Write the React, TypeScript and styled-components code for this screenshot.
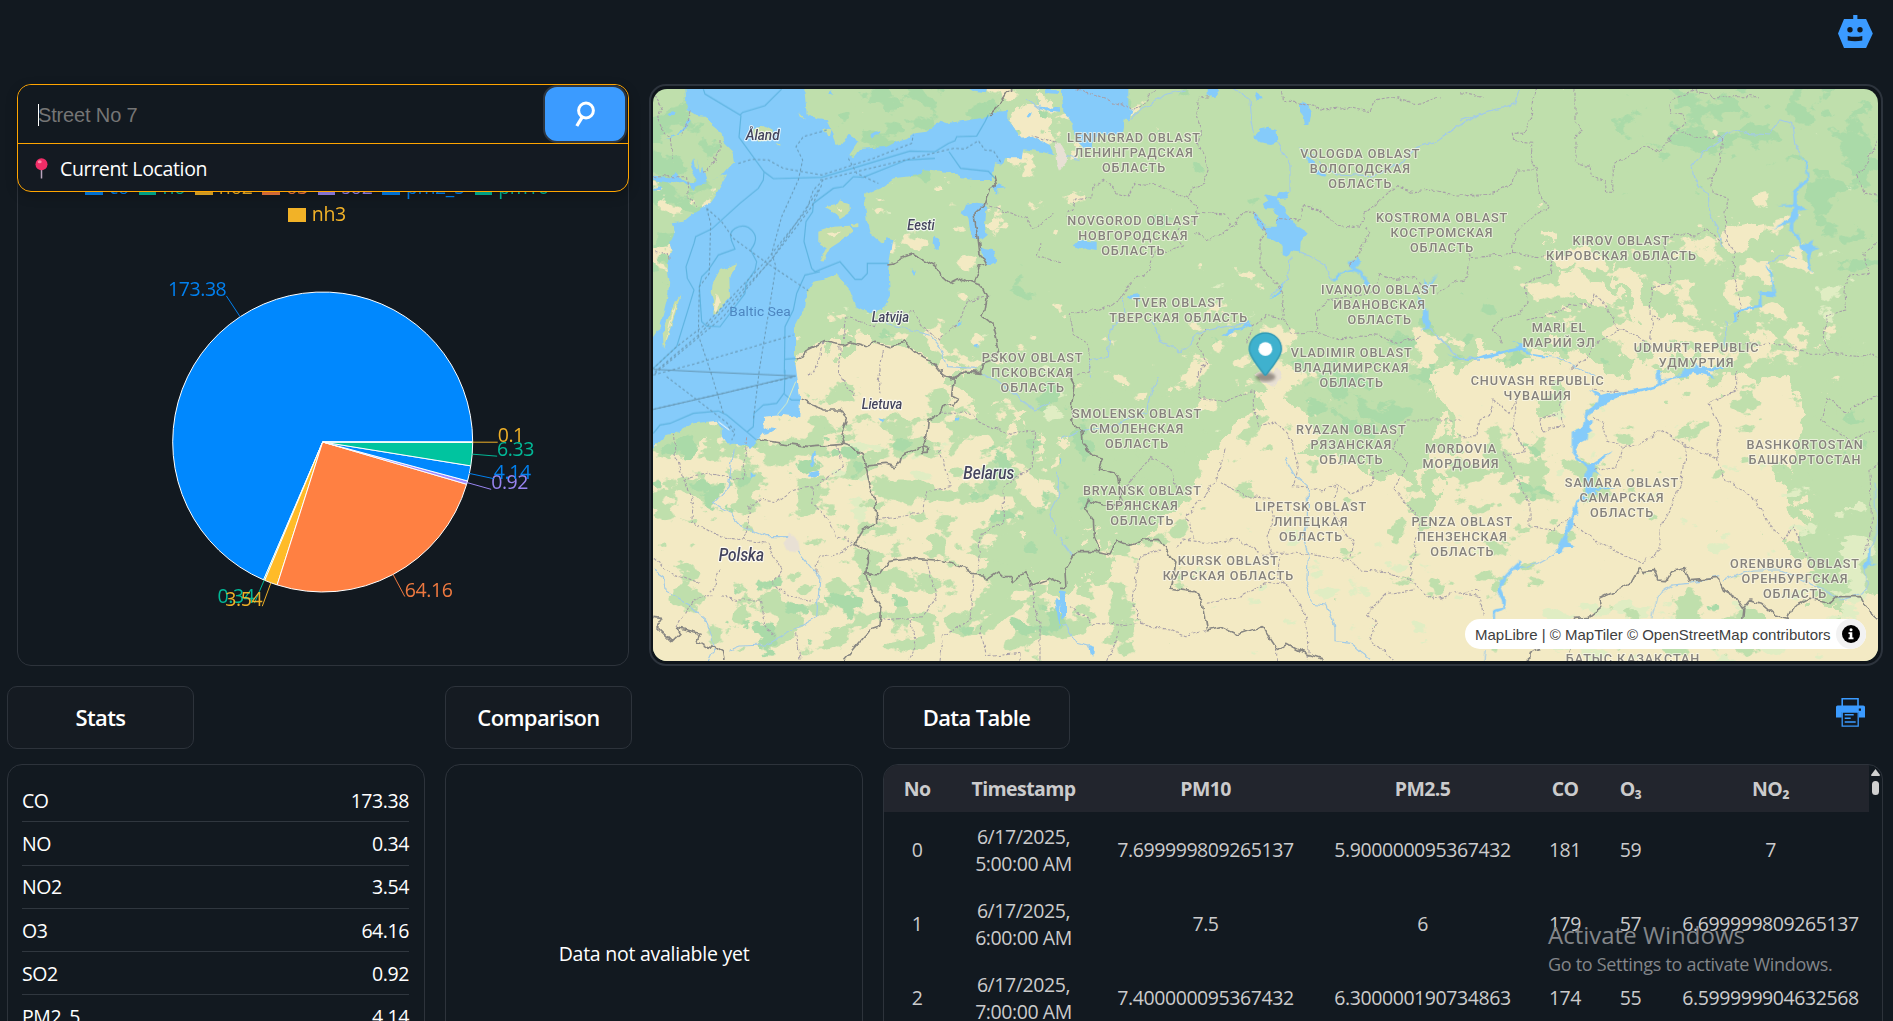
import React from "react";
import styled, { createGlobalStyle } from "styled-components";

const Global = createGlobalStyle`
  * { box-sizing: border-box; }
  body {
    margin: 0;
    background: #121920;
    color: #fff;
    font: 400 19.5px/27px "Open Sans", "Noto Sans", sans-serif;
    letter-spacing: -0.42px;
    overflow: hidden;
  }
`;

const Page = styled.div`
  height: 1021px;
  display: flex;
  flex-direction: column;
  overflow: hidden;
`;
const Header = styled.header`
  height: 84px;
  flex: none;
  display: flex;
  justify-content: flex-end;
  padding: 15px 20px 0 0;
`;
const TopRow = styled.section`
  display: flex;
  flex: none;
  gap: 20px;
  height: 582px;
  padding-left: 17px;
`;
const ChartCard = styled.div`
  position: relative;
  width: 612px;
  border: 1px solid #2d333b;
  border-radius: 14px;
  display: flex;
  flex-direction: column;
`;
const Search = styled.div`
  position: absolute;
  z-index: 2;
  inset: -1px -1px auto -1px;
  height: 108px;
  border: 1px solid #ffa500;
  border-radius: 14px;
  background: #141a22;
  box-shadow: 0 4px 12px rgba(0, 0, 0, 0.22);
  display: flex;
  flex-direction: column;
`;
const SearchBar = styled.div`
  height: 59px;
  border-bottom: 1px solid #ffa500;
  background: #121920;
  border-radius: 14px 14px 0 0;
  display: flex;
  align-items: center;
  justify-content: space-between;
  padding: 0 1px 0 20px;
`;
const Placeholder = styled.span`
  height: 22px;
  border-left: 1px solid #fff;
  margin-top: 1px;
  color: #757575;
  font: 20px/22px "Liberation Sans", Arial, sans-serif;
  letter-spacing: -0.15px;
  text-indent: -1px;
`;
const SearchButton = styled.button`
  width: 84px;
  height: 58px;
  border: 2px solid #2d3640;
  border-radius: 14px;
  background: #3b9bff;
  padding: 0;
  display: grid;
  place-items: center;
`;
const Suggestion = styled.div`
  flex: 1;
  display: flex;
  align-items: center;
  gap: 12px;
  padding: 2px 0 0 17px;
  letter-spacing: -0.35px;
`;
const Legend = styled.div`
  display: flex;
  flex-wrap: wrap;
  justify-content: center;
  padding: 88px 50px 0 48px;
`;
const LegendItem = styled.span<{ $color: string }>`
  display: flex;
  align-items: center;
  height: 27px;
  margin-right: 10px;
  color: ${(p) => p.$color};
  gap: 6px;
  opacity: 0.95;
  &::before {
    content: "";
    width: 17.5px;
    height: 13.5px;
    margin-top: 3px;
    background: ${(p) => p.$color};
  }
`;
const Pie = styled.svg`
  display: block;
  width: 610px;
  height: 438px;
`;
const MapFrame = styled.div`
  width: 1234px;
  border: 2px solid #2d343d;
  border-radius: 17px;
  padding: 3px 3px 3px 2px;
  background: #0f151b;
`;
const MapView = styled.div`
  position: relative;
  width: 1225px;
  height: 572px;
  border-radius: 14px;
  overflow: hidden;
`;
const MapSvg = styled.svg`
  display: block;
  width: 1225px;
  height: 572px;
`;
const Attribution = styled.div`
  position: absolute;
  right: 12px;
  bottom: 12px;
  width: 401px;
  height: 30px;
  border-radius: 15px;
  background: #fff;
  color: #404040;
  font: 15px/31px "Liberation Sans", Arial, sans-serif;
  letter-spacing: 0;
  display: flex;
  justify-content: space-between;
  padding-left: 10px;
  white-space: nowrap;
`;
const InfoButton = styled.span`
  width: 30px;
  height: 30px;
  border-radius: 50%;
  background: #f2f2f2;
  display: grid;
  place-items: center;
`;
const BottomRow = styled.section`
  display: grid;
  grid-template-columns: 418px 418px 1000px;
  column-gap: 20px;
  padding: 20px 0 0 7px;
`;
const Column = styled.div`
  display: flex;
  flex-direction: column;
  gap: 15px;
`;
const TitleRow = styled.div`
  display: flex;
  justify-content: space-between;
  padding-right: 18px;
`;
const Title = styled.h2`
  margin: 0;
  width: 187px;
  height: 63px;
  border: 1px solid #2d333b;
  border-radius: 10px;
  background: #151b22;
  font-size: 22px;
  font-weight: 600;
  letter-spacing: -0.62px;
  display: grid;
  place-items: center;
`;
const Panel = styled.div`
  height: 400px;
  border: 1px solid #2d333b;
  border-radius: 15px;
  overflow: hidden;
`;
const StatsPanel = styled(Panel)`
  padding: 14px 15px 0 14px;
`;
const StatRow = styled.div`
  display: flex;
  justify-content: space-between;
  align-items: center;
  height: 43.3px;
  border-bottom: 1px solid #30373f;
`;
const EmptyPanel = styled(Panel)`
  height: 378px;
  display: grid;
  place-items: center;
  letter-spacing: -0.25px;
`;
const TablePanel = styled(Panel)`
  display: flex;
  color: #cbcbcc;
`;
const Table = styled.div`
  width: 985px;
  overflow: hidden;
`;
const TableRow = styled.div<{ $head?: boolean }>`
  display: grid;
  width: 995px;
  grid-template-columns: 66px 147px 217px 217px 68px 63px 217px;
  height: ${(p) => (p.$head ? 47 : 74)}px;
  align-items: center;
  text-align: center;
  padding-top: ${(p) => (p.$head ? 0 : 1)}px;
  background: ${(p) => (p.$head ? "#22252d" : "transparent")};
  font-weight: ${(p) => (p.$head ? 700 : 400)};
  letter-spacing: ${(p) => (p.$head ? -0.6 : -0.42)}px;
`;
const Stamp = styled.span`
  width: 104px;
  justify-self: center;
`;
const Scrollbar = styled.div`
  flex: 1;
  display: flex;
  flex-direction: column;
  align-items: center;
  gap: 5px;
  padding-top: 4px;
`;
const Thumb = styled.div`
  width: 7px;
  height: 14px;
  border-radius: 4px;
  background: #d0d0d0;
`;
const Watermark = styled.div`
  position: absolute;
  z-index: 3;
  left: 1548px;
  top: 918px;
  color: #83868a;
  white-space: nowrap;
`;
const WatermarkTitle = styled.div`
  font-size: 24px;
  line-height: 33px;
  letter-spacing: 0;
`;
const WatermarkText = styled.div`
  font-size: 18px;
  line-height: 26px;
  letter-spacing: -0.3px;
`;

const pollutants = [
  { name: "co", value: 173.38, color: "#0088fe" },
  { name: "no", value: 0.34, color: "#00c49f" },
  { name: "no2", value: 3.54, color: "#ffbb28" },
  { name: "o3", value: 64.16, color: "#ff8042" },
  { name: "so2", value: 0.92, color: "#a28cff" },
  { name: "pm2_5", value: 4.14, color: "#0088fe" },
  { name: "pm10", value: 6.33, color: "#00c49f" },
  { name: "nh3", value: 0.1, color: "#ffbb28" },
];

const stats: [string, string][] = [
  ["CO", "173.38"],
  ["NO", "0.34"],
  ["NO2", "3.54"],
  ["O3", "64.16"],
  ["SO2", "0.92"],
  ["PM2_5", "4.14"],
  ["PM10", "6.33"],
];

const rows = [
  ["0", "6/17/2025, 5:00:00 AM", "7.699999809265137", "5.900000095367432", "181", "59", "7"],
  ["1", "6/17/2025, 6:00:00 AM", "7.5", "6", "179", "57", "6.699999809265137"],
  ["2", "6/17/2025, 7:00:00 AM", "7.400000095367432", "6.300000190734863", "174", "55", "6.599999904632568"],
];

function PieChart() {
  const cx = 304.7;
  const cy = 215;
  const r = 150;
  const total = pollutants.reduce((s, p) => s + p.value, 0);
  const at = (a: number, d: number) => [cx + d * Math.cos(a), cy - d * Math.sin(a)];
  let angle = 0;
  const slices = pollutants.map((p) => {
    const start = angle;
    const end = (angle += (p.value / total) * Math.PI * 2);
    return { ...p, start, end, mid: (start + end) / 2 };
  });
  return (
    <Pie viewBox="0 0 610 438">
      {slices.map((s) => {
        const [x1, y1] = at(s.start, r);
        const [x2, y2] = at(s.end, r);
        const big = s.end - s.start > Math.PI ? 1 : 0;
        return (
          <path
            key={s.name}
            d={`M${cx},${cy}L${x1},${y1}A${r},${r} 0 ${big} 0 ${x2},${y2}Z`}
            fill={s.color}
            stroke="#fff"
          />
        );
      })}
      {slices.map((s) => {
        const [x1, y1] = at(s.mid, r);
        const [x2, y2] = at(s.mid, r + 25);
        return (
          <g key={s.name} opacity=".93">
            <path d={`M${x1},${y1}L${x2},${y2}`} stroke={s.color} />
            <text x={x2} y={y2} fill={s.color} textAnchor={x2 > cx ? "start" : "end"}>
              {s.value}
            </text>
          </g>
        );
      })}
    </Pie>
  );
}

/* The map is drawn in six sheets, each in units of a third of a pixel. */
const sheets: Record<string, string> = {
  A: "translate(0 0) scale(.33333)",
  B: "translate(420 0) scale(.33333)",
  C: "translate(820 0) scale(.33333)",
  D: "translate(0 290) scale(.33333)",
  E: "translate(420 290) scale(.33333)",
  F: "translate(820 290) scale(.33333)",
};
const overview = "translate(-640 -80) scale(1.2073)";

const sea =
  "M135,0L140,90 170,108 195,110 215,135 245,160 250,185 280,215 285,245 262,265 240,290 215,297 262,283 245,312 232,335 205,375 160,400 130,425 95,430 105,455 88,490 95,510 80,545 88,600 85,640 75,680 60,740 40,770 0,780 0,1110 40,1105 80,1065 110,1058 160,1030 230,1022 245,1045 245,1065 262,1090 320,1095 325,1110 350,1080 370,1055 372,1010 430,1005 478,1012 480,950 470,880 465,840 465,740 490,690 500,640 520,605 550,600 590,583 630,630 650,680 690,700 730,685 750,650 745,560 760,480 740,475 725,490 690,460 680,420 672,345 720,325 760,295 840,285 850,268 900,272 940,280 965,295 1000,300 1055,300 1065,250 1090,255 1095,235 1145,235 1150,208 1190,212 1240,225 1230,195 1180,170 1150,175 1130,155 1105,120 1105,92 1070,95 1045,110 990,120 920,130 900,125 860,155 825,160 800,178 770,185 740,200 660,207 640,232 628,225 655,185 625,165 610,190 590,195 580,160 560,120 530,118 500,98 490,0Z";

const water: [string, string][] = [
  ["A", "M975,375 1010,368 1040,372 1035,440 1040,465 1022,480 1000,470 990,450 985,415 965,400Z"],
  ["A", "M1020,500 1035,508 1060,510 1072,545 1045,555 1030,540Z"],
  ["A", "M880,470 898,475 896,510 885,512 878,490ZM1050,320 1070,312 1098,322 1070,325 1068,345 1060,325ZM812,565 828,575 822,585ZM950,735 968,722 965,732 952,740ZM1000,795 1015,790 1012,804ZM690,165 718,150 715,165 700,172ZM570,27 580,45 565,40ZM985,27 1045,27 1040,40 1000,35Z"],
  ["A", "M40,290 90,295 110,280 130,300 150,310 170,300 160,280 150,260 160,235 165,265 178,262 170,235 180,280 190,260 200,310 170,315 160,330 130,305 100,310 40,300ZM75,175 110,165 150,118 155,125 125,160 100,172ZM85,100 110,96 105,108 90,108ZM40,327 65,320 60,330 40,332ZM1190,50 1200,80 1260,85 1260,95 1230,92 1200,88ZM1165,98 1175,100 1170,110 1160,108ZM1215,20 1260,35 1260,42 1220,40Z"],
  ["B", "M5,27 3,0 208,0 208,85 218,92 205,122 195,112 190,155 165,165 120,160 100,185 98,205 75,205 60,190 45,185 40,140 25,110 10,95Z"],
  ["B", "M583,172 600,148 625,143 650,150 652,188 630,195 600,190Z"],
  ["B", "M720,70 735,65 752,90 745,135 735,135 730,108 720,95ZM585,45 595,38 605,58 590,60ZM440,27 480,27 470,50 455,52 440,42Z"],
  ["B", "M612,342 650,350 655,338 670,340 690,335 680,355 650,358 670,380 690,410 715,445 740,460 722,485 720,515 690,510 680,530 668,525 668,497 630,475 610,450 585,420 575,395 590,405 610,428 615,440 650,440 652,410 640,385 612,385 610,370 625,362Z"],
  ["B", "M38,500 60,480 110,485 110,510 80,505 60,508ZM740,228 760,240 765,262 745,245ZM760,262 800,285 795,290 770,282ZM200,648 238,642 240,665 225,658ZM487,768 510,748 545,742 565,720 575,735 530,752 505,765ZM630,655 655,635 670,605 672,620 655,645Z"],
  ["B", "M815,600 840,578 860,570 875,565 862,548 880,545 895,530 898,552 885,563 905,572 925,612 930,620 915,615 902,580 875,572 845,582 825,605ZM1072,650 1085,655 1095,685 1108,690 1110,745 1080,750 1098,740 1085,715 1090,690 1070,668ZM1088,625 1092,595 1100,620 1135,578 1115,610 1095,640Z"],
  ["C", "M-40,820 0,838 50,832 80,822 130,812 165,805 180,795 150,780 180,790 195,800 210,820 240,825 290,832 240,832 200,820 185,810 130,822 90,835 0,842Z"],
  ["C", "M1012,212 1030,238 1043,252 1046,310 1020,325 1010,345 1012,375 1045,388 1018,392 1015,410 1000,430 1000,455 1020,462 1022,495 1045,490 1060,482 1055,500 1080,505 1055,515 1048,545 1060,582 1045,560 1040,520 1020,505 1012,470 985,450 988,430 935,447 985,420 995,400 1000,380 950,375 1000,370 1000,340 1020,310 1040,300 1038,258Z"],
  ["C", "M915,558 935,570 940,600 948,650 905,645 905,680 850,692 832,700 830,725 820,728 820,700 855,682 895,675 900,632 940,635 935,605 930,580ZM595,900 595,870 600,898 640,895 668,885 672,868 700,865 710,848 725,862 790,860 790,867 740,872 765,895 735,885 700,875 678,892Z"],
  ["F", "M590,0 605,0 600,38 640,20 668,10 620,35 595,52 540,68 500,72 470,85 440,100 420,115 390,130 383,150 400,155 388,168 400,183 382,190 380,210 355,222 345,235 350,255 385,285 420,265 455,242 430,270 408,285 408,305 425,318 400,305 393,330 395,352 470,355 410,360 410,375 360,370 385,385 350,398 355,435 340,440 343,465 325,490 320,520 345,530 312,532 300,550 283,548 300,520 315,490 318,465 330,450 340,410 345,395 380,370 375,320 380,295 350,265 335,245 335,185 368,172 378,120 410,100 415,85 390,60 425,75 450,68 500,62 550,55 590,45Z"],
  ["F", "M180,572 182,590 198,595 160,600 130,635 122,655 138,690 135,715 108,730 108,760 98,760 100,720 130,712 125,690 112,665 118,635 150,600ZM1253,583 1230,588 1215,600 1210,580 1222,575 1225,535 1232,530 1230,580Z"],
  ["D", "M365,180 385,172 410,175 385,190 370,192ZM335,303 348,315 335,330ZM515,250 528,245 520,265 530,272 520,290 510,285 520,275 510,265ZM505,308 535,302 530,318 505,320ZM715,145 735,150 728,160ZM945,143 960,145 955,155 945,153ZM1245,688 1260,690 1260,780 1252,730Z"],
  ["E", "M0,660 18,665 18,740 5,750 0,700ZM85,825 102,830 100,860 88,850ZM0,265 4,270 0,290Z"],
];

const islands =
  "M340,145 370,138 395,152 402,168 390,180 355,185 340,165ZM600,360 612,372 625,375 628,400 600,418 585,400 555,382 590,375ZM535,455 580,440 630,437 640,455 600,485 570,505 550,542 543,537 560,505 535,490ZM635,432 655,430 655,445 640,445ZM290,550 240,570 218,610 215,640 222,660 220,704 232,700 245,680 270,650 268,590 288,568ZM122,643 105,665 95,690 68,760 72,808 90,750 105,700ZM550,145 575,148 570,168 560,168ZM478,98 495,115 483,112ZM410,192 422,195 418,200Z";

const cream: string[] = [
  "500,378 600,350 640,348 652,300 680,288 715,283 750,285 775,300 800,312 790,325 850,345 880,375 872,400 900,440 935,448 965,430 985,410 1000,385 1005,362 1040,340 1060,325 1080,350 1120,380 1165,395 1195,390 1200,345 1185,315 1210,290 1250,300 1290,290 1320,300 1330,310 1360,300 1400,310 1420,320 1440,300 1500,335 1480,390 1490,440 1500,500 1600,505 1600,590 500,590",
  "842,90 868,80 870,108 858,122 845,110",
  "1285,200 1315,202 1320,220 1290,222",
  "1290,225 1330,228 1345,250 1320,262 1300,250",
  "1340,215 1362,240 1385,265 1400,290 1380,300 1355,270",
  "1430,185 1460,182 1455,205 1435,205",
];
const forest: string[] = [
  "840,350 862,345 870,370 860,400 845,390",
  "860,430 880,425 905,440 920,470 890,490 850,480 820,460",
  "905,410 935,400 950,425 935,440 910,435",
  "1075,375 1100,360 1110,340 1150,360 1170,370 1150,390 1130,385",
  "1175,400 1200,395 1185,430 1172,440",
  "1275,325 1290,312 1298,328 1285,345 1277,342",
  "1510,285 1556,290 1556,370 1535,410 1525,450 1505,435 1495,400 1510,360 1520,320",
  "890,330 960,320 1000,340 985,380 930,385 890,360",
  "920,385 975,380 960,405 930,410",
  "560,352 585,350 580,372 556,375",
];

/* Density fields: [x, y, rx, ry, density], painted softly and broken up by noise. */
type Field = [number, number, number, number, number][];
const deepField: Field = [
  [565, 130, 40, 60, 1], [560, 200, 30, 40, 0.9], [760, 110, 90, 40, 0.9], [890, 90, 40, 25, 1],
  [735, 295, 40, 30, 0.6], [850, 250, 20, 40, 0.5], [1420, 105, 80, 35, 1.15], [1530, 130, 40, 90, 0.9],
  [1290, 290, 60, 15, 1], [1130, 300, 60, 40, 0.5], [1000, 170, 60, 40, 0.4], [1200, 270, 60, 30, 0.6],
  [960, 105, 50, 20, 0.5], [1120, 330, 60, 25, 1],
];
const sandField: Field = [
  [565, 180, 35, 35, 0.95], [850, 105, 40, 35, 1], [900, 100, 60, 25, 0.5], [780, 190, 60, 40, 0.6],
  [880, 170, 30, 30, 0.6], [700, 290, 30, 30, 0.7], [790, 290, 50, 30, 0.7], [1030, 280, 45, 50, 0.7],
  [1070, 310, 40, 30, 0.7], [975, 330, 70, 35, 0.7], [1190, 300, 40, 25, 1], [1320, 230, 60, 30, 0.9],
  [1440, 215, 60, 50, 0.8], [1420, 285, 90, 25, 1], [1520, 290, 25, 30, 0.8], [880, 260, 25, 45, 0.5],
  [560, 220, 20, 20, 1], [960, 300, 60, 25, 0.4], [1300, 265, 40, 20, 0.6],
];
const groveField: Field = [
  [590, 385, 50, 40, 1.1], [680, 385, 55, 30, 0.9], [640, 510, 60, 35, 0.9], [740, 350, 60, 40, 0.5],
  [830, 350, 50, 40, 0.9], [860, 440, 60, 60, 1.15], [770, 460, 70, 60, 0.6], [760, 390, 80, 40, 0.6],
  [870, 515, 80, 30, 1], [720, 505, 50, 30, 0.8], [690, 330, 30, 20, 0.8], [930, 400, 60, 60, 0.9],
  [1000, 360, 70, 40, 0.7], [1170, 390, 60, 40, 0.5], [1260, 400, 50, 50, 0.85], [1350, 380, 60, 40, 0.5],
  [1440, 350, 60, 40, 0.45], [1180, 460, 60, 40, 0.35], [1400, 520, 80, 25, 1], [1530, 330, 40, 60, 0.8],
  [790, 510, 60, 30, 0.7], [560, 460, 30, 60, 0.6], [955, 490, 60, 30, 0.3], [1250, 480, 60, 40, 0.3],
  [690, 440, 60, 40, 0.4],
];
const pineField: Field = [
  [590, 385, 45, 40, 0.9], [690, 380, 50, 25, 0.9], [745, 365, 25, 15, 1.2], [850, 520, 60, 25, 0.9],
  [640, 505, 50, 35, 0.8], [860, 400, 60, 60, 0.7], [1120, 340, 50, 30, 1], [1540, 380, 20, 60, 0.7],
  [720, 505, 50, 20, 1], [1400, 520, 70, 20, 0.7], [870, 340, 20, 40, 0.9], [1265, 395, 20, 30, 1],
];
const paleField: Field = [
  [720, 400, 60, 30, 0.7], [1120, 480, 120, 50, 0.5], [1400, 525, 120, 30, 1.3], [1320, 350, 80, 40, 0.4],
  [1530, 460, 30, 60, 0.9], [1450, 430, 80, 50, 0.4], [820, 350, 60, 20, 0.5], [1530, 250, 25, 40, 0.7],
  [850, 330, 40, 30, 0.5],
];

const seaRoutes =
  "M190,27L195,42 300,105 308,97 375,77 425,27M303,105L297,172 372,275 400,296 545,292 640,264 810,213 885,215 925,190 945,182 950,170 1010,168 1035,125 1045,105M372,275L370,300 355,325 300,370 215,447 167,470 162,490 138,560 142,595 162,630 150,670 110,800 40,865M927,215L962,265 1045,274 1065,295M885,235L800,240 670,292 640,290 610,320 580,325 520,370 518,395 498,425 492,485 515,565 525,575 600,545 645,598 665,598 682,580 682,550 745,550M540,575L495,585 470,640 460,690 435,740 433,880M433,838L468,835M275,480C260,450 300,430 325,442C350,460 355,480 332,510L350,545 345,570 318,610 315,640 285,680 240,740 200,738 185,725 178,620 185,590 205,570 235,525 285,507 273,478M40,1060L60,1035 90,1030 160,1000 235,993 260,1005 350,1080M322,1055L340,1040 342,1000 370,975 410,970 433,938 435,870M433,942L455,960 480,960";
const ferries =
  "M295,250L335,238 385,240 430,265 545,285 700,235 815,190 820,165M560,150L490,170 468,200 488,240 475,300 425,410 395,520 408,560 358,870 340,1020M625,235L650,280 715,310M540,300L620,282 940,205 975,207 1015,182 1035,210 1060,212 1085,250M550,300L520,330 500,390 380,540 200,730 110,800 40,865M545,315L515,380 390,545 240,700 175,765 40,880M535,330L400,530 250,710 40,885M200,385L245,425 280,475 375,545 505,632M200,385L212,430 208,580 178,620 175,765 215,885 250,1000M40,885L170,850 460,765M80,890L250,1020 285,1050M40,988L465,890M265,1040L285,1060 275,1080";

const nations: [string, string][] = [
  ["A", "M1045,105L1080,70 1100,38 1115,37 1115,27M1065,290L1072,318 1048,328 1033,375 1002,405 1015,480 1020,520 1040,555 1018,560 1000,608 965,595 930,612 905,590 885,558 850,540 820,522 785,535 760,550 745,552M1000,608L1025,615 1042,650 1035,690 1028,710 1055,730 1065,765 1075,810 1055,840 1028,850 1020,880 975,875 935,898 905,880 880,850 830,822 790,785 750,803 705,790 680,800 630,785 610,795 550,785 500,810 485,830 470,838"],
  ["D", "M905,0L910,20 940,25 935,75 955,85 940,105 910,110 900,130 865,150 860,200 845,230 865,235 865,250 848,250 845,230 785,255 780,275 760,290 735,283 680,288 670,255 635,228 610,220 500,229 355,210M935,25L975,5 1025,8M610,220L603,195 618,155 600,120 550,120 520,102 485,88M675,288L685,340 708,400 710,460 670,480 645,520 685,545 685,580 677,610 690,655 725,715 720,770 690,780 612,873M680,608L720,612 745,575 820,565 885,570 980,592 990,610 1030,612 1040,628 1075,605 1090,620 1115,620 1120,635 1155,605 1175,645 1230,625 1260,640M40,742L65,745 50,770 95,815 120,790 110,772 180,790 170,815 205,835 215,822 250,845 255,873"],
  ["E", "M20,0L45,50 32,150 65,180 70,220 95,255 130,265 118,300 175,315 185,380 170,405 130,405 85,390 75,415 100,450 103,500 120,545 150,552 170,513 215,525 255,510 295,508 320,545 345,580 330,655 400,665 425,690 440,780 480,770 530,795 605,770 650,840 680,820 740,852 788,868M120,545L50,545 15,600 18,655 0,655"],
  ["F", "M350,745L385,742 425,710 420,685 460,665 515,635 540,590 550,605 580,602 590,630 620,632 635,605 675,595 690,632 775,625 790,660 830,685 850,715 870,690 905,700 945,735 985,745 1000,710 1030,695 1050,685 1110,700 1130,680 1200,680 1215,710 1253,742M855,715L850,760M205,873L208,850 240,838M350,745L330,850"],
];

const regions: [string, string][] = [
  ["A", "M45,45L65,80 50,110 70,155 90,170 100,245M150,90L140,130 120,170M240,180L240,210 220,250 190,280M40,290L140,290 145,350 170,380M40,515L80,515 88,540M1035,370L1090,390 1160,415 1180,445 1240,400M1200,490L1195,530 1260,545M1175,165L1250,190M1045,645L980,665 960,720 900,780 850,740 820,695 740,700 700,740 620,710 610,780M545,790L540,830 510,890M600,800L595,880 640,950M730,810L715,900 720,940"],
  ["B", "M50,27L215,85 240,80 290,27M445,50L415,55 410,110 425,145 415,190 430,225 445,265 430,310 400,325 380,350 410,380 405,420 360,430 340,470 370,495 330,515 280,510 270,570 230,590 190,650 120,690 30,700 40,760 85,790 90,870 50,890M380,350L330,330 280,315 230,310 200,350 170,340 130,300 100,315 95,350 50,360 20,410M410,400L500,405 515,440 450,480 400,460M515,440L545,400 580,395M580,395L620,460 600,480 600,560 640,600 670,640 665,720 620,705 580,740 560,790M645,415L720,420 730,380 780,390 830,435 900,445 915,400 980,340 1010,320 1060,335 1120,330 1180,345 1260,345M915,445L930,460 900,510 870,560M668,35L670,60 720,70 790,90 870,80 930,95 945,60 1000,50 1070,75 1140,50M960,580L1000,600 1060,590 1090,620M960,580L940,640 800,660 770,700 770,750M670,720L700,760 760,755 840,780 900,765 970,770 1010,790 1080,770M440,750L410,790 440,850 410,890M1230,520L1220,590 1130,640"],
  ["C", "M0,35L70,50M230,27L210,120 190,160 160,160 165,185 215,190 215,240 230,270 170,270 160,310 90,340 0,345M230,270L235,340 270,380 220,410 165,460 160,520 30,530M345,27L345,130 370,150 345,170 345,250 390,260 395,290 435,305 440,337 458,337 460,260 480,240 560,195 600,215 650,150 730,175 785,170 780,250 750,290 760,340 805,355 795,400 800,480 820,520 820,600 845,680 830,720M650,150L670,130 670,105 630,100 635,60 700,30 760,50 900,50M1253,180L1220,250 1190,290 1215,340 1253,345M1253,490L1210,520 1225,580 1160,590 1155,640 1160,690 1100,705 1090,760 1110,820 1253,830M160,520L280,535 270,580 200,610 200,660 180,700 130,710 100,750 130,790M200,720L290,700 330,670 390,680 405,640 440,680 455,710 480,750 420,780 380,830 330,870M480,750L530,770 570,800 580,700 600,720M570,700L575,620 630,610 635,570 610,490 640,460 710,465 740,450 790,490M840,790L970,795 1050,820 1110,820"],
  ["D", "M100,190L105,250 130,330 200,310 270,320 310,330 320,200M130,330L160,400 155,455 240,500 310,510 320,480 330,410 350,390 410,395 460,360 520,350 570,320 610,290 590,220M520,350L515,400 560,440 590,500 640,515M640,520L600,550 535,560 530,610M310,510L380,520 430,600 400,640 430,670 520,695M210,670L240,600M110,770L150,700 180,680 220,680M180,640L130,620 90,610 40,560M240,680L300,690 360,690 380,770 400,800M470,790L480,873M900,130L1000,130 1020,160 1110,190 1180,180 1180,290 1090,350 1090,460 1020,490 1015,600M900,240L930,350 860,365 850,430 710,450M860,575L890,680 850,740 730,750M1000,615L990,750 910,800 900,873M1170,640L1200,770 1200,873M810,750L830,820 805,868M1020,770L1040,860 1140,850 1140,873"],
  ["E", "M415,0L420,85 495,95 580,60 580,130 600,170 650,155 700,220 715,290 700,350 790,360 830,340 870,370 935,345 940,305 1000,300M495,240L470,330 380,440 400,500 350,530M270,265L240,300 180,370 200,410M270,265L330,290 355,360M480,335L560,380 630,385 640,440 620,510 640,560M370,510L460,520 530,505 600,550 720,550 870,570 900,600 980,605 1050,630 1060,550 1080,450 1000,360 1040,280 1000,230 1040,150 1200,150M870,560L880,520 820,430 830,350M440,700L540,680 620,640 680,645 740,740 745,868M680,645L650,620 660,560M30,710L100,760 180,765 240,760 220,680 240,560 300,540M240,760L330,780 380,800 440,780M140,870L180,780M650,840L650,873M1060,660L980,670 920,730 950,760 930,810 1000,870M1050,630L1120,690 1190,670 1260,660"],
  ["F", "M0,200L50,200 60,150 90,130 100,90 150,130 170,90 160,180 200,250 130,250 210,400 210,470 280,480 330,440M250,180L310,170 300,60M250,180L240,150 290,130M400,145L430,160 440,210 490,230 550,220 600,180 680,230 660,350 625,430 600,480 600,540 545,580 480,550 420,520 340,460M680,230L770,270 780,170 750,100 830,60 830,0M770,270L800,330 890,390 930,470 970,510 1000,470 1040,560 1100,580M1253,80L1200,100 1160,130 1100,80 1085,150 1170,210 1253,180M500,70L400,60M400,300L470,290 490,230M1253,280L1230,300 1235,480 1210,560M0,670L60,680 70,740"],
];

const rivers: [string, string][] = [
  ["A", "M745,730L810,750 870,765 900,800 920,860 1010,865M1160,60L1200,90"],
  ["B", "M205,122L240,90 280,70 310,45 380,30M520,27L570,60 575,120 583,160M652,190L690,250 690,335M1260,100L1180,150 1130,185 1060,205 1020,250 930,290 830,285 720,200M720,515L790,550 815,600M690,530L685,600 630,650M570,730L490,740 410,760 390,790 360,815 300,780 270,720M190,655L195,700 150,750 145,830 90,840 88,890M1110,745L1150,790 1200,835 1260,838M0,225L60,240"],
  ["C", "M0,122L60,100 120,85 165,70 178,30M788,500L770,440 750,400 745,350 700,290 697,260 730,215 820,150 860,160 930,165 960,120 995,130 1005,200 1020,215M920,555L960,525 1010,530M795,725L800,800M290,832L380,880 400,890"],
  ["D", "M285,235L275,280 265,350 220,400 270,430 300,465 380,500 450,500 480,550 540,620 530,740 440,790 380,825 300,828 270,840M40,600L70,620 75,660 150,705 200,750 225,830 205,873M1020,10L1070,30 1180,120 1230,100M1255,300L1255,380 1230,430 1250,500"],
  ["E", "M675,265L700,310 745,350 745,440 730,500 745,560 740,640 755,700 800,705 825,770 825,815 870,820 930,868M0,205L70,180 180,170 190,150 260,130 270,70 295,20M0,505L40,560M10,760L50,820 90,830"],
  ["F", "M283,550L230,580 195,595M790,630L880,600 960,600 1050,640 1140,685M575,745L590,680 640,645 690,640 780,620M1245,340L1253,480 1225,540M1215,600L1220,660 1180,680 1140,690M75,873L78,840"],
];

const labels: [string, number, number, ...string[]][] = [
  ["B", 222, 187, "LENINGRAD OBLAST", "ЛЕНИНГРАДСКАЯ", "ОБЛАСТЬ"],
  ["B", 901, 233, "VOLOGDA OBLAST", "ВОЛОГОДСКАЯ", "ОБЛАСТЬ"],
  ["B", 220, 435, "NOVGOROD OBLAST", "НОВГОРОДСКАЯ", "ОБЛАСТЬ"],
  ["B", 1146, 427, "KOSTROMA OBLAST", "КОСТРОМСКАЯ", "ОБЛАСТЬ"],
  ["B", 356, 680, "TVER OBLAST", "ТВЕРСКАЯ ОБЛАСТЬ"],
  ["B", 959, 643, "IVANOVO OBLAST", "ИВАНОВСКАЯ", "ОБЛАСТЬ"],
  ["B", 875, 832, "VLADIMIR OBLAST", "ВЛАДИМИРСКАЯ", "ОБЛАСТЬ"],
  ["C", 484, 495, "KIROV OBLAST", "КИРОВСКАЯ ОБЛАСТЬ"],
  ["C", 297, 757, "MARI EL", "МАРИЙ ЭЛ"],
  ["C", 710, 815, "UDMURT REPUBLIC", "УДМУРТИЯ"],
  ["F", 233, 46, "CHUVASH REPUBLIC", "ЧУВАШИЯ"],
  ["A", 1178, 845, "PSKOV OBLAST", "ПСКОВСКАЯ", "ОБЛАСТЬ"],
  ["E", 231, 145, "SMOLENSK OBLAST", "СМОЛЕНСКАЯ", "ОБЛАСТЬ"],
  ["E", 874, 193, "RYAZAN OBLAST", "РЯЗАНСКАЯ", "ОБЛАСТЬ"],
  ["E", 247, 375, "BRYANSK OBLAST", "БРЯНСКАЯ", "ОБЛАСТЬ"],
  ["E", 753, 424, "LIPETSK OBLAST", "ЛИПЕЦКАЯ", "ОБЛАСТЬ"],
  ["E", 505, 586, "KURSK OBLAST", "КУРСКАЯ ОБЛАСТЬ"],
  ["F", 7, 468, "PENZA OBLAST", "ПЕНЗЕНСКАЯ", "ОБЛАСТЬ"],
  ["F", 3, 250, "MORDOVIA", "МОРДОВИЯ"],
  ["F", 486, 352, "SAMARA OBLAST", "САМАРСКАЯ", "ОБЛАСТЬ"],
  ["F", 1035, 236, "BASHKORTOSTAN", "БАШКОРТОСТАН"],
  ["F", 1005, 595, "ORENBURG OBLAST", "ОРЕНБУРГСКАЯ", "ОБЛАСТЬ"],
  ["F", 519, 878, "БАТЫС ҚАЗАҚСТАН"],
];

const countries: [string, number, number, number, number, string][] = [
  ["A", 317, 181, 102, 46, "Åland"],
  ["A", 802, 451, 82, 46, "Eesti"],
  ["A", 695, 726, 112, 46, "Latvija"],
  ["D", 665, 118, 122, 46, "Lietuva"],
  ["D", 970, 327, 153, 53, "Belarus"],
  ["D", 236, 574, 136, 53, "Polska"],
];

const MapLabel = styled.text`
  font: 500 38px Roboto, sans-serif;
  letter-spacing: 2.7px;
  text-anchor: middle;
  fill: #86827d;
  stroke: rgba(250, 248, 235, 0.7);
  stroke-width: 6px;
  stroke-linejoin: round;
  paint-order: stroke;
`;
const CountryLabel = styled.text`
  font-family: Roboto, sans-serif;
  font-weight: 500;
  font-style: italic;
  letter-spacing: 0;
  fill: #45455e;
  stroke: rgba(255, 255, 255, 0.75);
  stroke-width: 7px;
  stroke-linejoin: round;
  paint-order: stroke;
`;
const SeaLabel = styled.text`
  font: 400 41px Roboto, sans-serif;
  letter-spacing: 0;
  fill: #4d86c0;
`;

type NoiseProps = { id: string; freq: string; seed: number; rgb: string; cut: number };
const Noise = ({ id, freq, seed, rgb, cut }: NoiseProps) => {
  const [r, g, b] = rgb.split(" ");
  return (
    <filter
      id={id}
      filterUnits="userSpaceOnUse"
      x="0"
      y="0"
      width="1260"
      height="600"
      colorInterpolationFilters="sRGB"
    >
      <feTurbulence type="fractalNoise" baseFrequency={freq} numOctaves={5} seed={seed} />
      <feColorMatrix values="0 0 0 0 1 0 0 0 0 1 0 0 0 0 1 1 0 0 0 0" result="n" />
      <feComposite in="n" in2="SourceGraphic" operator="arithmetic" k2={0.5} k3={0.18} result="m" />
      <feColorMatrix
        in="m"
        values={`0 0 0 0 ${r} 0 0 0 0 ${g} 0 0 0 0 ${b} 0 0 0 50 ${-50 * (0.5 * cut + 0.18)}`}
      />
    </filter>
  );
};

const NoiseField = ({ noise, field }: { noise: string; field: Field }) => (
  <g filter={`url(#${noise})`}>
    <g filter="url(#spread)">
      <g transform={overview}>
        {field.map(([x, y, rx, ry, d], i) => (
          <ellipse key={i} cx={x} cy={y} rx={rx * 1.1} ry={ry * 1.1} fill="#fff" fillOpacity={Math.min(d, 1)} />
        ))}
      </g>
    </g>
  </g>
);

const Lines = ({ data, ...rest }: { data: [string, string][] } & React.SVGProps<SVGPathElement>) => (
  <>
    {data.map(([s, d], i) => (
      <g key={i} transform={sheets[s]}>
        <path d={d} fill="none" {...rest} />
      </g>
    ))}
  </>
);

function AreaMap() {
  return (
    <MapSvg viewBox="13 9 1225 572">
      <defs>
        <Noise id="deep" freq=".03 .04" seed={7} rgb=".667 .855 .66" cut={0.5} />
        <Noise id="sand" freq=".035 .045" seed={21} rgb=".953 .918 .765" cut={0.5} />
        <Noise id="grove" freq=".032 .045" seed={4} rgb=".749 .875 .675" cut={0.46} />
        <Noise id="pale" freq=".03 .05" seed={12} rgb=".88 .93 .765" cut={0.5} />
        <Noise id="pine" freq=".035 .045" seed={33} rgb=".667 .855 .66" cut={0.53} />
        <filter id="spread" filterUnits="userSpaceOnUse" x="0" y="0" width="1260" height="600">
          <feGaussianBlur stdDeviation="16" />
        </filter>
        <filter id="ragged" x="-.2" y="-.2" width="1.4" height="1.4">
          <feTurbulence type="fractalNoise" baseFrequency=".045" numOctaves={5} seed={3} />
          <feDisplacementMap in="SourceGraphic" scale={48} xChannelSelector="R" yChannelSelector="G" />
        </filter>
        <filter id="coast" x="-.05" y="-.05" width="1.1" height="1.1">
          <feTurbulence type="fractalNoise" baseFrequency=".13" numOctaves={2} seed={5} />
          <feDisplacementMap in="SourceGraphic" scale={5} xChannelSelector="R" yChannelSelector="G" />
        </filter>
        <filter id="wiggle" x="-.05" y="-.05" width="1.1" height="1.1">
          <feTurbulence type="fractalNoise" baseFrequency=".1" numOctaves={2} seed={8} />
          <feDisplacementMap in="SourceGraphic" scale={7} xChannelSelector="R" yChannelSelector="G" />
        </filter>
        <filter id="soft">
          <feGaussianBlur stdDeviation="1.6" />
        </filter>
      </defs>
      <rect width="1260" height="600" fill="#bfdfac" />
      <NoiseField noise="deep" field={deepField} />
      <NoiseField noise="sand" field={sandField} />
      <g transform={overview} filter="url(#ragged)" fill="#f3eac4">
        {cream.map((p) => (
          <polygon key={p} points={p} />
        ))}
      </g>
      <NoiseField noise="pale" field={paleField} />
      <NoiseField noise="grove" field={groveField} />
      <g transform={overview} filter="url(#ragged)" fill="#bfdfac">
        {forest.map((p) => (
          <polygon key={p} points={p} />
        ))}
      </g>
      <NoiseField noise="pine" field={pineField} />
      <g filter="url(#coast)">
        <g transform={sheets.A}>
          <path d={sea} fill="#85cbfa" />
          <path d={islands} fill="#c6dfa9" />
          <path d="M230,640L240,665 228,700 222,690ZM590,380L610,390 600,400ZM560,460L600,455 580,475ZM100,690L110,670 85,760 75,790Z" fill="#f3eac4" />
        </g>
        {water.map(([s, d], i) => (
          <g key={i} transform={sheets[s]}>
            <path d={d} fill="#85cbfa" />
          </g>
        ))}
      </g>
      <g transform={sheets.A} fill="none">
        <path d={seaRoutes} stroke="#5fb4e0" strokeWidth="3.5" />
        <path d={ferries} stroke="#6a9bb8" strokeWidth="3.2" strokeDasharray="8 7" />
        <path d="M40,868L180,875 468,888M40,988L250,940 465,888" stroke="#6496b2" strokeWidth="3" />
        <path d="M412,1004L440,970 467,905" stroke="#d9ecc4" strokeWidth="3" />
        <path d="M235,1025L268,1050" stroke="#fff" strokeWidth="3" />
      </g>
      <g filter="url(#wiggle)">
        <Lines data={rivers} stroke="#a3cbe6" strokeWidth="3.5" />
        <Lines data={regions} stroke="#a79fa8" strokeWidth="3.2" strokeDasharray="9 5" />
        <Lines data={nations} stroke="#888783" strokeWidth="4.8" strokeLinejoin="round" />
      </g>
      <g filter="url(#coast)">
        <g transform={sheets.B}>
          <path d="M-15,190L5,195 22,225 20,245 0,272 -8,250ZM585,885L612,870 640,875 655,862 665,890 640,920 600,905Z" fill="#e8e0d4" />
        </g>
        <g transform={sheets.D}>
          <path d="M430,520L450,490 475,515 480,545 440,540Z" fill="#e8e0d4" />
        </g>
      </g>
      {labels.map(([s, x, y, ...lines]) => (
        <g key={lines[0]} transform={sheets[s]}>
          {lines.map((l, i) => (
            <MapLabel key={l} x={x} y={y + i * 45}>
              {l}
            </MapLabel>
          ))}
        </g>
      ))}
      {countries.map(([s, x, y, w, size, name]) => (
        <g key={name} transform={sheets[s]}>
          <CountryLabel x={x} y={y} fontSize={size} textLength={w} lengthAdjust="spacingAndGlyphs">
            {name}
          </CountryLabel>
        </g>
      ))}
      <g transform={sheets.A}>
        <SeaLabel x="268" y="708" textLength="184">
          Baltic Sea
        </SeaLabel>
      </g>
      <ellipse cx="625.5" cy="297" rx="10" ry="4.5" fill="#4a3f3a" opacity=".5" filter="url(#soft)" />
      <g transform="translate(608.7 252.3) scale(1.235)">
        <path
          d="M27,13.5C27,19.07 20.25,27 14.75,34.5C14.02,35.5 12.98,35.5 12.25,34.5C6.75,27 0,19.22 0,13.5C0,6.04 6.04,0 13.5,0C20.96,0 27,6.04 27,13.5Z"
          fill="#3fb1ce"
        />
        <path
          d="M13.5,.5C6.3,.5 .5,6.3 .5,13.5C.5,19 7,26.5 12.7,34.2C13.1,34.8 13.9,34.8 14.3,34.2C20,26.5 26.5,19 26.5,13.5C26.5,6.3 20.7,.5 13.5,.5Z"
          fill="none"
          stroke="#2f8ca4"
          strokeOpacity=".7"
        />
        <circle cx="13.5" cy="13.5" r="5.6" fill="#fff" />
      </g>
    </MapSvg>
  );
}

const BotIcon = () => (
  <svg width="35" height="33" viewBox="0 0 35 33">
    <path fill="#3b9bff" d="M15.2 0h4.200v4h8.700l6.700 14.500L28.100 33H6L0 18.500 6 4h9.200z" />
    <circle cx="12" cy="14.700" r="2.700" fill="#121920" />
    <circle cx="22" cy="14.700" r="2.700" fill="#121920" />
    <path fill="#121920" d="M9.700 21q7.300 1.700 14.600 0v4.400q-7.300 1.600-14.600 0z" />
  </svg>
);

const PrinterSvg = styled.svg`
  margin-top: 12px;
`;
const PrinterIcon = () => (
  <PrinterSvg width="29" height="29" viewBox="0 0 29 29">
    <path fill="#3b9bff" d="M5.400 0h17.400v7.500H5.400zM1.500 7.500h25.800Q29 7.500 29 9v10.500h-6V14H5.800v5.500H0V9q0-1.500 1.500-1.500z" />
    <path fill="#121920" d="M7 1.500h14.200v6H7zM22.800 10.500h2.200v2.200h-2.200z" />
    <path fill="#121920" stroke="#3b9bff" strokeWidth="1.300" d="M6.200 14.200h16v13.900h-16z" />
    <path stroke="#3b9bff" strokeWidth="1.600" d="M8.700 16.700h9M8.700 20.300h6M8.700 24h11" />
  </PrinterSvg>
);

const SearchIcon = () => (
  <svg width="22" height="26" viewBox="0 0 22 26" fill="none" stroke="#fff" strokeWidth="3">
    <circle cx="12" cy="9.500" r="7.400" />
    <path d="M8.200 16.200L2.800 25" strokeWidth="3.300" />
  </svg>
);

const PinIcon = () => (
  <svg width="13" height="21" viewBox="0 0 13 21">
    <path d="M6.500 10v10.500" stroke="#b9a5bd" strokeWidth="1.500" />
    <circle cx="6.500" cy="6.200" r="6" fill="#f02d67" />
    <ellipse cx="4.700" cy="3.700" rx="2" ry="1.500" fill="#ff86a8" />
  </svg>
);

export default function App() {
  return (
    <Page>
      <Global />
      <Header>
        <BotIcon />
      </Header>
      <TopRow>
        <ChartCard>
          <Search>
            <SearchBar>
              <Placeholder>Street No 7</Placeholder>
              <SearchButton>
                <SearchIcon />
              </SearchButton>
            </SearchBar>
            <Suggestion>
              <PinIcon />
              Current Location
            </Suggestion>
          </Search>
          <Legend>
            {pollutants.map((p) => (
              <LegendItem key={p.name} $color={p.color}>
                {p.name}
              </LegendItem>
            ))}
          </Legend>
          <PieChart />
        </ChartCard>
        <MapFrame>
          <MapView>
            <AreaMap />
            <Attribution>
              MapLibre | © MapTiler © OpenStreetMap contributors
              <InfoButton>
                <svg width="18" height="18" viewBox="0 0 18 18">
                  <circle cx="9" cy="9" r="9" fill="#000" />
                  <circle cx="9" cy="4.700" r="1.500" fill="#fff" />
                  <path d="M6.500 7.300h3.800v5.200h1.200v1.700H6.500v-1.700h1.200V9H6.500z" fill="#fff" />
                </svg>
              </InfoButton>
            </Attribution>
          </MapView>
        </MapFrame>
      </TopRow>
      <BottomRow>
        <Column>
          <Title>Stats</Title>
          <StatsPanel>
            {stats.map(([k, v]) => (
              <StatRow key={k}>
                <span>{k}</span>
                <span>{v}</span>
              </StatRow>
            ))}
          </StatsPanel>
        </Column>
        <Column>
          <Title>Comparison</Title>
          <EmptyPanel>Data not avaliable yet</EmptyPanel>
        </Column>
        <Column>
          <TitleRow>
            <Title>Data Table</Title>
            <PrinterIcon />
          </TitleRow>
          <TablePanel>
            <Table>
              <TableRow $head>
                {["No", "Timestamp", "PM10", "PM2.5", "CO", "O₃", "NO₂"].map((h) => (
                  <span key={h}>{h}</span>
                ))}
              </TableRow>
              {rows.map((r) => (
                <TableRow key={r[0]}>
                  {r.map((c, i) => (i === 1 ? <Stamp key={i}>{c}</Stamp> : <span key={i}>{c}</span>))}
                </TableRow>
              ))}
            </Table>
            <Scrollbar>
              <svg width="9" height="7" viewBox="0 0 9 7">
                <path d="M4.500 0L9 6q0 1-1 1H1Q0 7 0 6z" fill="#d0d0d0" />
              </svg>
              <Thumb />
            </Scrollbar>
          </TablePanel>
        </Column>
      </BottomRow>
      <Watermark>
        <WatermarkTitle>Activate Windows</WatermarkTitle>
        <WatermarkText>Go to Settings to activate Windows.</WatermarkText>
      </Watermark>
    </Page>
  );
}
